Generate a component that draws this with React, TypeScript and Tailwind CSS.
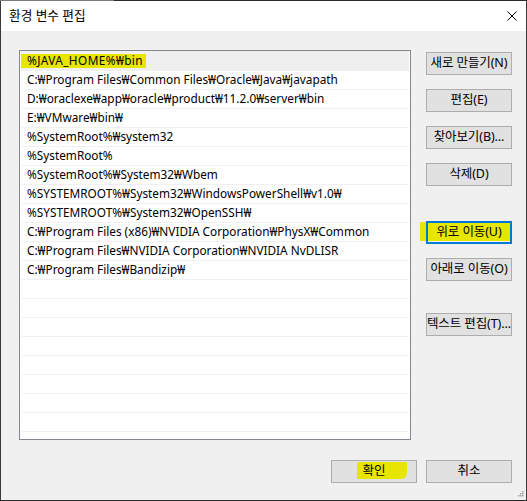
import React from "react";

const paths: string[] = [
  "%JAVA_HOME%₩bin",
  "C:₩Program Files₩Common Files₩Oracle₩Java₩javapath",
  "D:₩oraclexe₩app₩oracle₩product₩11.2.0₩server₩bin",
  "E:₩VMware₩bin₩",
  "%SystemRoot%₩system32",
  "%SystemRoot%",
  "%SystemRoot%₩System32₩Wbem",
  "%SYSTEMROOT%₩System32₩WindowsPowerShell₩v1.0₩",
  "%SYSTEMROOT%₩System32₩OpenSSH₩",
  "C:₩Program Files (x86)₩NVIDIA Corporation₩PhysX₩Common",
  "C:₩Program Files₩NVIDIA Corporation₩NVIDIA NvDLISR",
  "C:₩Program Files₩Bandizip₩",
];

const font = "font-['Noto_Sans','Noto_Sans_CJK_KR',sans-serif]";

function Button({
  label,
  focused = false,
  marked = false,
  className = "",
}: {
  label: string;
  focused?: boolean;
  marked?: boolean;
  className?: string;
}) {
  return (
    <div className={`relative h-[23px] w-[86px] ${className}`}>
      {marked && (
        <div className="absolute left-[-6px] top-[1px] h-[19px] w-[90px] bg-[#e6e600]" />
      )}
      <div
        className={`relative flex h-full w-full items-center justify-center whitespace-nowrap text-[12.5px] leading-none tracking-[-0.1px] text-black ${
          focused
            ? "border-2 border-[#0078d7]"
            : "border border-[#adadad] bg-[#e1e1e1]"
        }`}
      >
        {label}
      </div>
    </div>
  );
}

function SizeGrip() {
  return (
    <svg width="6" height="6" viewBox="0 0 6 6" className="block">
      {[
        [4, 0],
        [2, 2],
        [4, 2],
        [0, 4],
        [2, 4],
        [4, 4],
      ].map(([x, y]) => (
        <rect key={`${x}-${y}`} x={x} y={y} width="1.5" height="1.5" fill="#a6a6a6" />
      ))}
    </svg>
  );
}

export default function App() {
  const emptyRows = 8;
  return (
    <div className={`relative h-[501px] w-[527px] bg-[#f0f0f0] ${font}`}>
      {/* window frame */}
      <div className="flex h-[1px] w-full">
        <div className="h-full w-[114px] bg-[#7a7a7a]" />
        <div className="h-full flex-1 bg-[#2b2b2b]" />
      </div>
      <div className="flex h-[499px] w-full border-x border-[#3a3a3a]">
        <div className="flex w-full flex-col">
          {/* title bar */}
          <div className="flex h-[30px] items-center justify-between bg-white pl-[8px] pr-[9px]">
            <span className="pb-[1px] text-[12.7px] text-black">환경 변수 편집</span>
            <svg width="10" height="10" viewBox="0 0 10 10" className="mb-[1px]">
              <path d="M0.5 0.5 L9.5 9.5 M9.5 0.5 L0.5 9.5" stroke="#000" strokeWidth="1" />
            </svg>
          </div>

          {/* body */}
          <div className="relative flex flex-1 flex-col pl-[18px] pr-[14px] pt-[19px]">
            <div className="flex">
              {/* path list */}
              <div className="h-[390px] w-[392px] overflow-hidden border border-[#828790] bg-white px-[1px]">
                <div className="flex h-[20px] items-center bg-[#efefef] text-[11.8px] text-black">
                  <span className="flex h-[14px] items-center bg-[#e6e600] pl-[6px] pr-[3px] tracking-[0.4px]">
                    {paths[0]}
                  </span>
                </div>
                {paths.slice(1).map((p) => (
                  <div
                    key={p}
                    className="flex h-[19px] items-center whitespace-nowrap border-b border-[#f0f0f0] pl-[6px] text-[11.8px] text-black"
                  >
                    {p}
                  </div>
                ))}
                {Array.from({ length: emptyRows }).map((_, i) => (
                  <div key={i} className="h-[19px] border-b border-[#f0f0f0]" />
                ))}
              </div>

              {/* action buttons */}
              <div className="ml-[15px] flex flex-col pt-[2px]">
                <Button label="새로 만들기(N)" />
                <Button label="편집(E)" className="mt-[14px]" />
                <Button label="찾아보기(B)..." className="mt-[14px]" />
                <Button label="삭제(D)" className="mt-[14px]" />
                <Button label="위로 이동(U)" focused marked className="mt-[35px]" />
                <Button label="아래로 이동(O)" className="mt-[14px]" />
                <Button label="텍스트 편집(T)..." className="mt-[32px]" />
              </div>
            </div>

            {/* dialog buttons */}
            <div className="mt-[20px] flex justify-end gap-[9px]">
              <div className="relative h-[23px] w-[86px]">
                <div className="relative flex h-full w-full items-center justify-center border border-[#adadad] bg-[#e1e1e1] text-[12.5px] leading-none text-black">
                  <div className="absolute left-[25px] top-[1px] h-[17px] w-[50px] rounded-br-[6px] rounded-tl-[3px] bg-[#e6e600]" />
                  <span className="relative">확인</span>
                </div>
              </div>
              <Button label="취소" />
            </div>

            <div className="absolute bottom-[3px] right-[2px]">
              <SizeGrip />
            </div>
          </div>
        </div>
      </div>
      <div className="h-[1px] w-full bg-[#2b2b2b]" />
    </div>
  );
}
